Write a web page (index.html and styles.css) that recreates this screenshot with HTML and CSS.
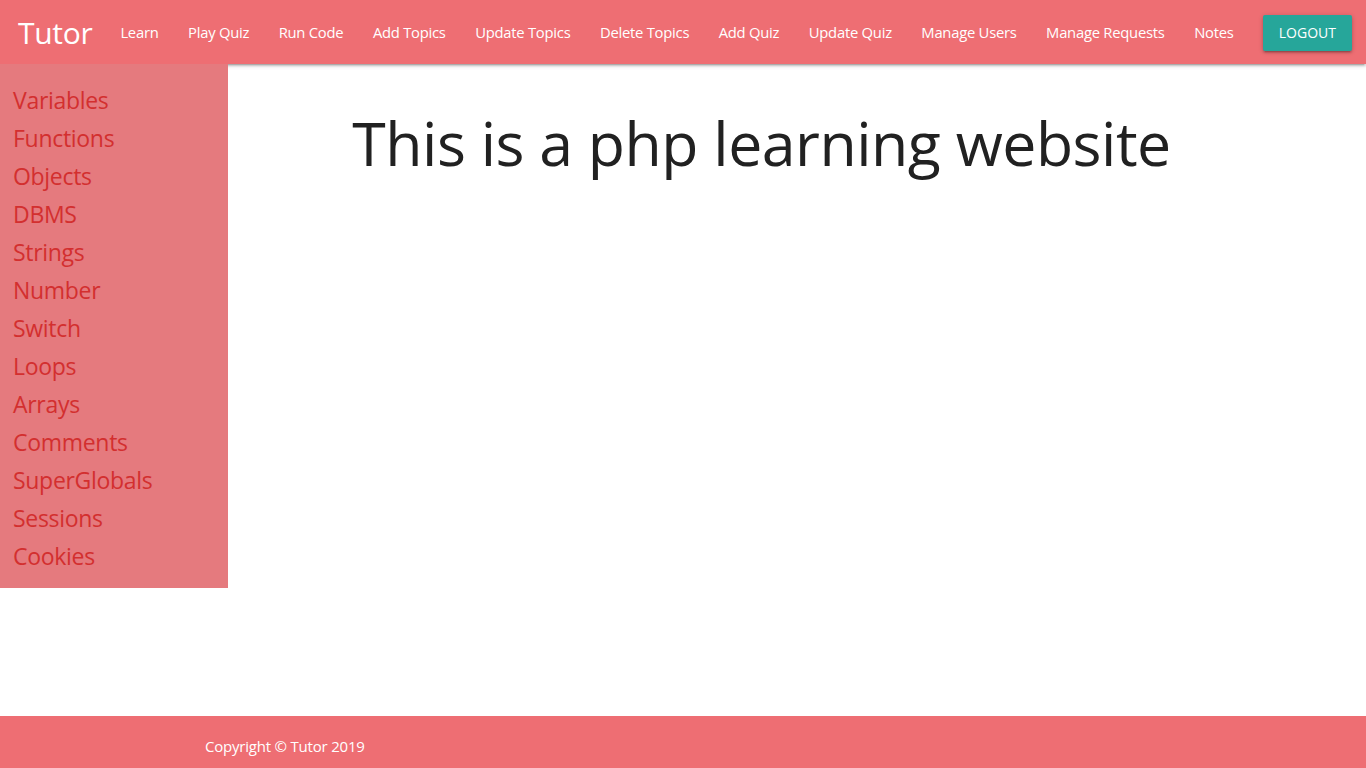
FILE: index.html
```html
<!DOCTYPE html>
<html lang="en">
<head>
<meta charset="utf-8">
<title>Tutor</title>
<link rel="stylesheet" href="styles.css">
</head>
<body>
<nav class="nav">
  <a class="brand" href="#">Tutor</a>
  <ul class="nav-links">
    <li><a href="#">Learn</a></li>
    <li><a href="#">Play Quiz</a></li>
    <li><a href="#">Run Code</a></li>
    <li><a href="#">Add Topics</a></li>
    <li><a href="#">Update Topics</a></li>
    <li><a href="#">Delete Topics</a></li>
    <li><a href="#">Add Quiz</a></li>
    <li><a href="#">Update Quiz</a></li>
    <li><a href="#">Manage Users</a></li>
    <li><a href="#">Manage Requests</a></li>
    <li><a href="#">Notes</a></li>
    <li class="logout-item"><a class="btn-logout" href="#">LOGOUT</a></li>
  </ul>
</nav>
<div class="page">
  <aside class="sidebar">
    <a href="#">Variables</a>
    <a href="#">Functions</a>
    <a href="#">Objects</a>
    <a href="#">DBMS</a>
    <a href="#">Strings</a>
    <a href="#">Number</a>
    <a href="#">Switch</a>
    <a href="#">Loops</a>
    <a href="#">Arrays</a>
    <a href="#">Comments</a>
    <a href="#">SuperGlobals</a>
    <a href="#">Sessions</a>
    <a href="#">Cookies</a>
  </aside>
  <main class="main">
    <h1 class="title">This is a php learning website</h1>
  </main>
</div>
<footer class="footer">
  <div class="footer-inner">Copyright © Tutor 2019</div>
</footer>
</body>
</html>
```
FILE: styles.css
```css
* { box-sizing: border-box; }
html, body { margin: 0; padding: 0; height: 100%; }
body {
  font-family: "Open Sans", "Noto Sans", "DejaVu Sans", sans-serif;
  font-size: 15px;
  color: #212121;
  background: #fff;
  display: flex;
  flex-direction: column;
  min-height: 768px;
}
a { text-decoration: none; }

.nav {
  height: 64px;
  background: #ee6e73;
  display: flex;
  align-items: center;
  padding-left: 18px;
  box-shadow: 0 2px 2px 0 rgba(0,0,0,0.14), 0 3px 1px -2px rgba(0,0,0,0.12), 0 1px 5px 0 rgba(0,0,0,0.2);
  position: relative;
  z-index: 1;
}
.brand {
  color: #fff;
  font-size: 30px;
  line-height: 64px;
  padding-top: 2px;
  letter-spacing: -0.3px;
}
.nav-links {
  list-style: none;
  margin: 0 0 0 auto;
  padding: 0 14px 0 0;
  display: flex;
  align-items: center;
  height: 64px;
}
.nav-links a {
  color: #fff;
  font-size: 14.8px;
  padding: 0 14.75px;
  line-height: 64px;
  display: block;
  letter-spacing: -0.25px;
}
.logout-item { margin-left: 14.5px; padding-top: 2px; }
.nav-links .btn-logout {
  background: #26a69a;
  height: 36px;
  line-height: 36px;
  padding: 0 16px;
  border-radius: 2px;
  font-size: 14px;
  letter-spacing: 0;
  box-shadow: 0 2px 2px 0 rgba(0,0,0,0.14), 0 3px 1px -2px rgba(0,0,0,0.12), 0 1px 5px 0 rgba(0,0,0,0.2);
}

.page {
  display: flex;
  align-items: flex-start;
  flex: 1;
}
.sidebar {
  width: 228px;
  background: #e57a7e;
  display: flex;
  flex-direction: column;
  padding: 17px 0 13px 13px;
  position: relative;
  z-index: 2;
}
.sidebar a {
  color: #d32f2f;
  font-size: 23px;
  line-height: 38px;
  letter-spacing: -0.3px;
}
.main {
  flex: 1;
  padding-right: 71px;
  text-align: center;
}
.title {
  margin: 34px 0 0;
  font-size: 60.8px;
  font-weight: 400;
  line-height: 90px;
  color: #212121;
  letter-spacing: -0.5px;
}

.footer {
  background: #ee6e73;
  height: 52px;
  display: flex;
  align-items: center;
}
.footer-inner {
  width: 70%;
  margin: 0 auto;
  color: #fff;
  font-size: 15px;
  padding-top: 8px;
  letter-spacing: -0.2px;
}
```
